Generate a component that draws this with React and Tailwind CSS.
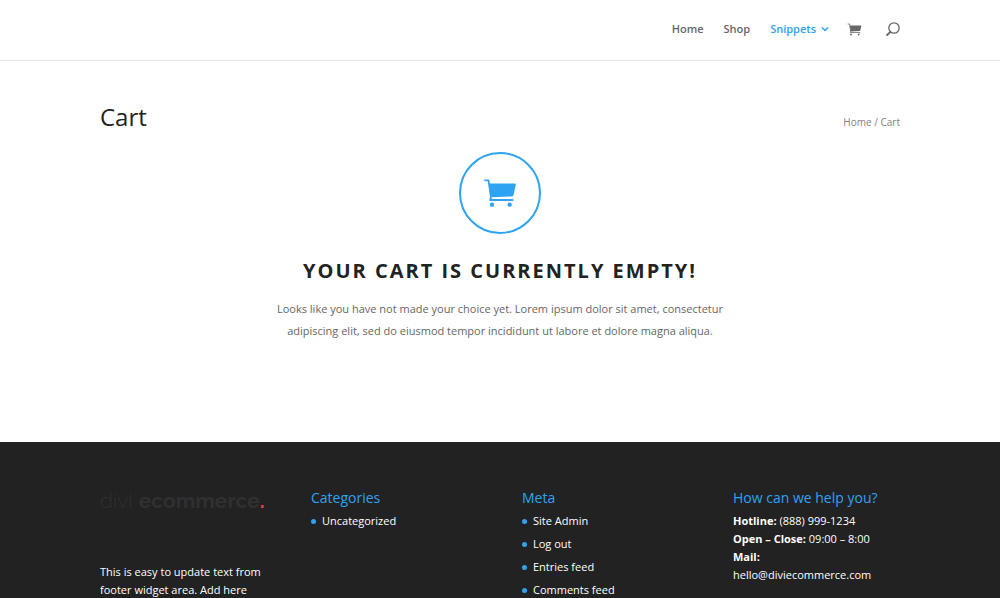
function CartIcon({ className }) {
  return (
    <svg viewBox="0 0 100 90" className={className} fill="currentColor" aria-hidden="true">
      <path
        d="M5 7H15.500L23 57L20.500 66H88"
        fill="none"
        stroke="currentColor"
        strokeWidth="5.500"
        strokeLinecap="round"
        strokeLinejoin="round"
      />
      <path d="M18 16.500H94Q98 16.500 97.300 20.500L90.500 51Q89.500 55 85.500 55.300L24 58Z" />
      <circle cx="26" cy="80" r="6.500" />
      <circle cx="79" cy="80" r="6.500" />
    </svg>
  );
}

function SearchIcon({ className }) {
  return (
    <svg viewBox="0 0 14 14" className={className} fill="none" stroke="currentColor" aria-hidden="true">
      <circle cx="8" cy="6" r="5.200" strokeWidth="1.300" />
      <path d="M4.400 9.800L1.100 13" strokeWidth="1.800" strokeLinecap="round" />
    </svg>
  );
}

function ChevronIcon({ className }) {
  return (
    <svg viewBox="0 0 8 8" className={className} fill="none" stroke="currentColor" aria-hidden="true">
      <path d="M1.300 2.700L4 5.400L6.700 2.700" strokeWidth="1.400" strokeLinecap="round" strokeLinejoin="round" />
    </svg>
  );
}

function LinkList({ title, items }) {
  return (
    <section>
      <h2 className="text-[14px] leading-6 text-[#2ea3f2]">{title}</h2>
      <ul className="mt-0.5 flex flex-col gap-[5px]">
        {items.map((item) => (
          <li key={item} className="flex items-center gap-[6px] leading-[18px]">
            <span className="size-[5px] rounded-full bg-[#2ea3f2]" />
            <a href="#">{item}</a>
          </li>
        ))}
      </ul>
    </section>
  );
}

export default function App() {
  return (
    <div className="flex h-screen flex-col overflow-hidden bg-white font-['Open_Sans',sans-serif] text-[#666]">
      <header className="shrink-0 border-b border-[#e6e6e6] pb-[2px]">
        <nav className="mx-auto flex h-[58px] w-4/5 items-center justify-end text-[11px] font-semibold">
          <a href="#">Home</a>
          <a href="#" className="ml-5">Shop</a>
          <a href="#" className="ml-5 flex items-center gap-[5px] text-[#2ea3f2]">
            Snippets
            <ChevronIcon className="size-2" />
          </a>
          <a href="#" aria-label="Cart" className="ml-[18px]">
            <CartIcon className="h-[13px] w-[15px]" />
          </a>
          <button type="button" aria-label="Search" className="ml-6">
            <SearchIcon className="size-[14px]" />
          </button>
        </nav>
      </header>

      <main className="mx-auto w-4/5 shrink-0 pt-10 pb-[100px]">
        <div className="flex items-end justify-between">
          <h1 className="text-[24px] leading-8 text-[#222]">Cart</h1>
          <p className="text-[10px] leading-[22px] text-[#808080]">
            <a href="#">Home</a> / Cart
          </p>
        </div>
        <section className="flex flex-col items-center pt-[19px] text-center">
          <div className="flex size-[82px] items-center justify-center rounded-full border-2 border-[#2ea3f2] text-[#2ea3f2]">
            <CartIcon className="h-[30px] w-[34px]" />
          </div>
          <h2 className="mt-[21px] text-[20px] leading-8 font-bold tracking-[2px] text-[#222] uppercase">
            Your cart is currently empty!
          </h2>
          <p className="mt-[11px] max-w-[480px] text-[11px] leading-[22px]">
            Looks like you have not made your choice yet. Lorem ipsum dolor sit amet, consectetur adipiscing elit, sed
            do eiusmod tempor incididunt ut labore et dolore magna aliqua.
          </p>
        </section>
      </main>

      <footer className="grow bg-[#222] text-[11px] leading-[18px] text-white">
        <div className="mx-auto grid w-4/5 grid-cols-4 gap-11 pt-11">
          <section>
            <a
              href="#"
              className="flex h-[30px] items-center font-['Raleway','Lato',sans-serif] text-[21px] whitespace-nowrap text-[#303032]"
            >
              <span className="font-light">divi</span>
              <span className="ml-[6px] font-bold">ecommerce</span>
              <span className="font-bold text-[#f33c4b]">.</span>
            </a>
            <p className="mt-[47px]">This is easy to update text from footer widget area. Add here</p>
          </section>
          <LinkList title="Categories" items={["Uncategorized"]} />
          <LinkList title="Meta" items={["Site Admin", "Log out", "Entries feed", "Comments feed"]} />
          <section>
            <h2 className="text-[14px] leading-6 text-[#2ea3f2]">How can we help you?</h2>
            <p className="mt-0.5">
              <strong>Hotline:</strong> (888) 999-1234
              <br />
              <strong>Open – Close:</strong> 09:00 – 8:00
              <br />
              <strong>Mail:</strong>
              <br />
              <a href="mailto:hello@diviecommerce.com">hello@diviecommerce.com</a>
            </p>
          </section>
        </div>
      </footer>
    </div>
  );
}
